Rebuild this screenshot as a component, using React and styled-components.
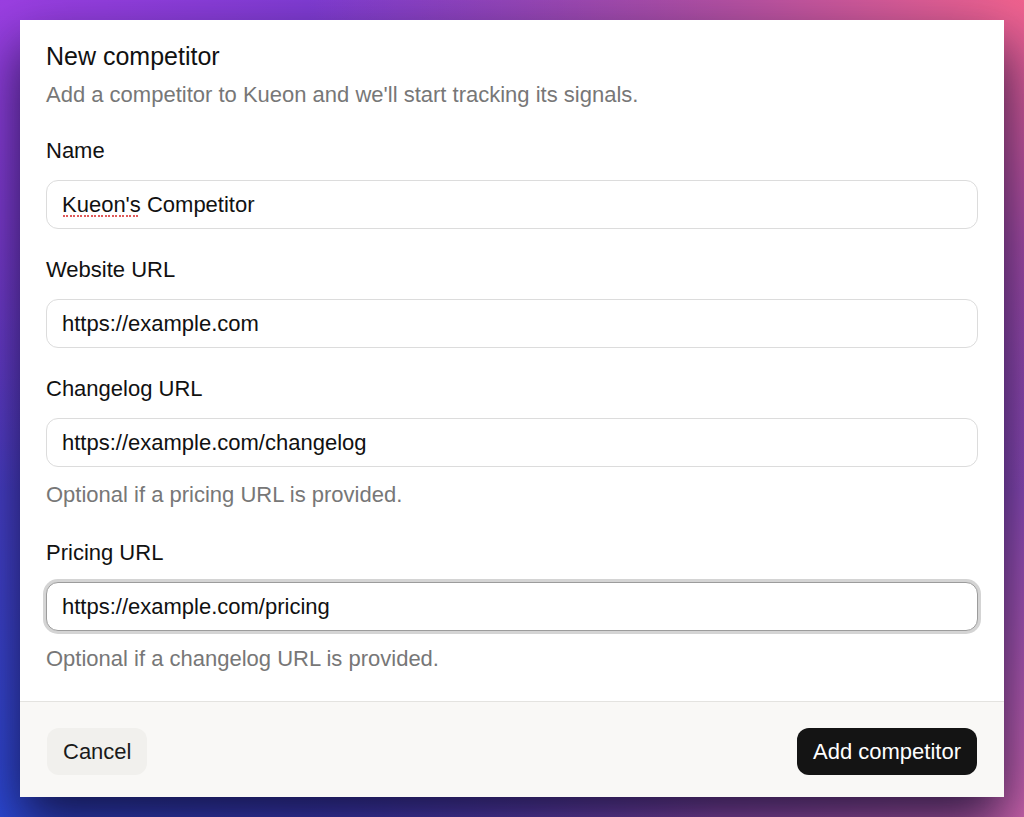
import React, { useEffect, useRef } from "react";
import styled, { createGlobalStyle } from "styled-components";

const Global = createGlobalStyle`
  html, body { margin: 0; padding: 0; }
  body {
    font-family: "Liberation Sans", Arial, sans-serif;
    width: 1024px;
    height: 817px;
    overflow: hidden;
    background-color: #5e38c0;
    background-image:
      radial-gradient(ellipse 70% 60% at 100% 0%, #f0628e 0%, rgba(240,98,142,0) 100%),
      radial-gradient(ellipse 70% 60% at 0% 0%, #9b3fe2 0%, rgba(155,63,226,0) 100%),
      radial-gradient(ellipse 70% 70% at 0% 100%, #2c4ad8 0%, rgba(44,74,216,0) 100%),
      radial-gradient(ellipse 70% 70% at 100% 100%, #cc64ac 0%, rgba(204,100,172,0) 100%);
  }
  * { box-sizing: border-box; }
`;

const Stage = styled.div`
  padding: 20px;
  height: 817px;
`;

const Dialog = styled.div`
  width: 984px;
  height: 777px;
  background: #ffffff;
  display: flex;
  flex-direction: column;
  box-shadow: 0 26px 50px rgba(12, 10, 40, 0.8);
`;

const Body = styled.div`
  flex: 1;
  padding: 20px 26px 0 26px;
  display: flex;
  flex-direction: column;
`;

const Title = styled.h2`
  margin: 0;
  font-size: 25px;
  line-height: 32px;
  font-weight: 400;
  color: #111111;
`;

const Subtitle = styled.p`
  margin: 9px 0 0 0;
  font-size: 22px;
  line-height: 28px;
  color: #777777;
`;

const Fields = styled.div`
  margin-top: 28px;
  display: flex;
  flex-direction: column;
  gap: 27px;
`;

const Field = styled.div`
  display: flex;
  flex-direction: column;
`;

const Label = styled.label`
  font-size: 22px;
  line-height: 28px;
  color: #111111;
  margin-bottom: 15px;
`;

const Input = styled.input`
  width: 932px;
  height: 49px;
  border: 1px solid #dcdcdc;
  border-radius: 12px;
  padding: 0 15px;
  font-family: "Liberation Sans", Arial, sans-serif;
  font-size: 22px;
  color: #111111;
  background-color: #ffffff;
  outline: none;
  caret-color: #111111;
  ${(p) =>
    p.$misspelled &&
    `
    background-image: repeating-linear-gradient(90deg, #e05a5a 0 2px, transparent 2px 3.5px);
    background-size: 76px 2px;
    background-position: 16px 34px;
    background-repeat: no-repeat;
  `}
  ${(p) =>
    p.$focused &&
    `
    border-color: #9c9c9c;
    box-shadow: 0 0 0 3px #d4d4d4;
  `}
`;

const Help = styled.div`
  margin-top: 14px;
  margin-bottom: 3px;
  font-size: 22px;
  line-height: 28px;
  color: #777777;
`;

const Footer = styled.div`
  height: 96px;
  background: #f9f8f6;
  border-top: 1px solid #e4e3e0;
  padding: 26px 27px 21px 27px;
  display: flex;
  justify-content: space-between;
  align-items: flex-start;
`;

const Button = styled.button`
  height: 47px;
  padding: 0 16px;
  border: none;
  border-radius: 12px;
  font-family: "Liberation Sans", Arial, sans-serif;
  font-size: 22px;
  cursor: pointer;
  background: ${(p) => (p.$primary ? "#141414" : "#f1f0ed")};
  color: ${(p) => (p.$primary ? "#ffffff" : "#1a1a1a")};
`;

export default function App() {
  const pricingRef = useRef(null);
  useEffect(() => {
    const el = pricingRef.current;
    if (el) {
      el.focus();
      const n = el.value.length;
      el.setSelectionRange(n, n);
    }
  }, []);

  return (
    <>
      <Global />
      <Stage>
        <Dialog>
          <Body>
            <Title>New competitor</Title>
            <Subtitle>Add a competitor to Kueon and we'll start tracking its signals.</Subtitle>
            <Fields>
              <Field>
                <Label>Name</Label>
                <Input $misspelled defaultValue="Kueon's Competitor" spellCheck={false} />
              </Field>
              <Field>
                <Label>Website URL</Label>
                <Input defaultValue="https://example.com" />
              </Field>
              <Field>
                <Label>Changelog URL</Label>
                <Input defaultValue="https://example.com/changelog" />
                <Help>Optional if a pricing URL is provided.</Help>
              </Field>
              <Field>
                <Label>Pricing URL</Label>
                <Input ref={pricingRef} $focused defaultValue="https://example.com/pricing" />
                <Help>Optional if a changelog URL is provided.</Help>
              </Field>
            </Fields>
          </Body>
          <Footer>
            <Button>Cancel</Button>
            <Button $primary>Add competitor</Button>
          </Footer>
        </Dialog>
      </Stage>
    </>
  );
}
